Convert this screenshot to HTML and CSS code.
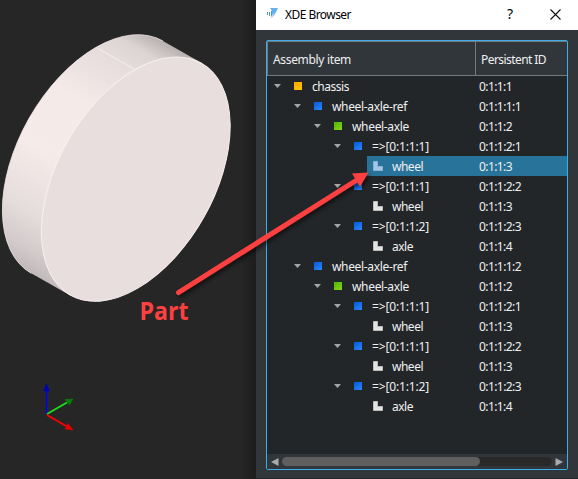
FILE: index.html
```
<!DOCTYPE html>
<html lang="en">
<head>
<meta charset="utf-8">
<title>XDE Browser</title>
<link rel="stylesheet" href="styles.css">
</head>
<body>
<main class="app">
  <section class="viewport">
    <svg width="256" height="479" viewBox="0 0 256 479">
      <defs>
        <linearGradient id="side" gradientUnits="userSpaceOnUse" x1="50" y1="284" x2="182" y2="52">
          <stop offset="0" stop-color="#c2baba"/>
          <stop offset=".08" stop-color="#d4cccc"/>
          <stop offset=".2" stop-color="#e5dcdc"/>
          <stop offset=".42" stop-color="#f5ebe9"/>
          <stop offset=".65" stop-color="#f4eae8"/>
          <stop offset=".84" stop-color="#e7dddd"/>
          <stop offset=".93" stop-color="#dcd3d3"/>
          <stop offset="1" stop-color="#b9b1b1"/>
        </linearGradient>
      </defs>
      <path d="M201.700 63.100L163 41A133.5 78.3 -60.5 0 0 31.2 273.3L69.9 295.3Z" fill="url(#side)"/>
      <path d="M163 41A133.5 78.3 -60.5 0 0 31.2 273.3" fill="none" stroke="#f4ebea" stroke-width=".8"/>
      <path d="M98 48.5L135.5 70" stroke="#f8f0ef"/>
      <ellipse cx="135.8" cy="179.2" rx="133.2" ry="78" transform="rotate(-60.5 135.8 179.2)" fill="#e8dedd" stroke="#f8f0ef"/>
      <path d="M46.5 414V391" stroke="#00f" stroke-width="1.5"/>
      <path d="M46.5 384L49.5 391H43.5Z" fill="#0000b4" stroke="#0000b4" stroke-width=".5"/>
      <path d="M47 414L67 402.500" stroke="#1be01b" stroke-width="1.8"/>
      <path d="M73 399L69.500 405L65 399.500Z" fill="#078007" stroke="#078007" stroke-width=".5"/>
      <path d="M47 415L67 426.500" stroke="#f00" stroke-width="1.8"/>
      <path d="M73 430L65 429L68 423.500Z" fill="#e80000" stroke="#e80000" stroke-width=".5"/>
    </svg>
  </section>
  <section class="dialog">
    <header class="titlebar">
      <svg class="logo" width="12" height="10" viewBox="0 0 12 10"><path d="M3 0H11L7 8H5V3Z" fill="#61b2ed"/><path d="M0 4H1V7H0ZM2 4H3V8H2ZM4 3H5V9H4Z" fill="#4a9ad8"/><path d="M6 6L8 5L6 9L3 10Z" fill="#b8dbf3"/></svg>
      <h1 class="title"><span class="fit" data-width="66">XDE Browser</span></h1>
      <span class="help">?</span>
      <svg class="close" width="11" height="11" viewBox="0 0 11 11"><path d="M.5 .5L10.500 10.500M10.500 .5L.5 10.500" stroke="#111" stroke-width="1.1"/></svg>
    </header>
    <div class="tree">
      <div class="columns"><span class="item-column"><span class="fit" data-width="78">Assembly item</span></span><span class="id-column"><span class="fit" data-width="65">Persistent ID</span></span></div>
      <div class="rows" id="rows"></div>
      <div class="scrollbar">
        <svg width="8" height="8" viewBox="0 0 8 8"><path d="M7.500 0V8L0 4Z" fill="#aaa"/></svg>
        <div class="track"><div class="thumb"></div></div>
        <svg width="8" height="8" viewBox="0 0 8 8"><path d="M.5 0V8L8 4Z" fill="#aaa"/></svg>
      </div>
    </div>
  </section>
  <svg class="callout" width="578" height="479" viewBox="0 0 578 479">
    <defs><filter id="shadow" x="-10%" y="-10%" width="120%" height="130%"><feDropShadow dx="2" dy="2.500" stdDeviation="2" flood-color="#000" flood-opacity=".6"/></filter></defs>
    <g filter="url(#shadow)">
      <path d="M178.500 292.500L360 178" stroke="#ff4041" stroke-width="5" stroke-linecap="round"/>
      <path d="M368.500 172.500L360 186.500L352 173.500Z" fill="#ff4041"/>
    </g>
    <text class="callout-text" x="139.500" y="320" textLength="49" lengthAdjust="spacingAndGlyphs">Part</text>
  </svg>
</main>
<script src="tree.js"></script>
</body>
</html>
```
FILE: styles.css
```
body {
  margin: 0;
  font: 12px/20px "Noto Sans", "Open Sans", sans-serif;
  color: #eff0f1;
}
svg { display: block; flex: none; }
.app {
  position: relative;
  display: flex;
  width: 578px;
  height: 479px;
  overflow: hidden;
  background: #262626;
}
.viewport {
  width: 256px;
  background: linear-gradient(90deg, #262626 240px, #1d1d1d);
}
.dialog {
  box-sizing: border-box;
  width: 322px;
  height: 479px;
  background: #31363b;
  border-bottom: 1px solid #25282b;
}
.titlebar {
  box-sizing: border-box;
  display: flex;
  align-items: center;
  height: 30px;
  padding: 0 17px 2px 11px;
  background: #fff;
  color: #000;
}
.logo { margin-bottom: 2px; }
.title {
  margin: 2px 0 0 6px;
  font-size: 12px;
  font-weight: 400;
}
.help {
  margin-left: auto;
  margin-right: 37px;
  font-size: 14px;
}
.tree {
  box-sizing: border-box;
  display: flex;
  flex-direction: column;
  width: 302px;
  height: 430px;
  margin: 10px;
  border: 1px solid #3daee9;
  border-radius: 2px;
  background: #232629;
}
.columns {
  box-sizing: border-box;
  display: flex;
  height: 35px;
  border: solid #76797c;
  border-width: 1px 0 1px 1px;
  background: #31363b;
  line-height: 35px;
}
.item-column {
  box-sizing: border-box;
  width: 208px;
  padding-left: 5px;
  border-right: 1px solid #76797c;
}
.id-column { padding-left: 5px; }
.rows { flex: 1; }
.row {
  display: flex;
  height: 20px;
  line-height: 22px;
  white-space: nowrap;
}
.name {
  display: flex;
  align-items: center;
  box-sizing: border-box;
  width: 212px;
  height: 20px;
}
.level-0 { padding-left: 7px; }
.level-1 { padding-left: 27px; }
.level-2 { padding-left: 47px; }
.level-3 { padding-left: 67px; }
.level-4 { padding-left: 100px; }
.level-4 .cell { padding-left: 6px; }
.selected .cell, .selected .pid { background: #287399; }
.arrow { width: 7px; margin-bottom: 1px; }
.cell {
  flex: 1;
  display: flex;
  align-items: center;
  height: 20px;
  padding-left: 13px;
}
.cell .fit {
  margin-top: 2px;
  line-height: 18px;
}
.square {
  width: 8px;
  height: 8px;
  margin-right: 10px;
}
.blue { background: linear-gradient(145deg, #0059db, #2e88ff); }
.green { background: linear-gradient(145deg, #52b600, #80d719); }
.gold { background: linear-gradient(145deg, #ffa500, #ffc600); }
.part { margin-right: 9px; }
.pid { flex: 1; height: 20px; }
.scrollbar {
  display: flex;
  align-items: center;
  justify-content: space-between;
  height: 15px;
  padding: 0 4px;
  background: #31363b;
}
.track {
  width: 270px;
  height: 9px;
  border-radius: 5px;
  background: #2a2929;
}
.thumb {
  width: 198px;
  height: 9px;
  border-radius: 5px;
  background: #605f5f;
}
.callout {
  position: absolute;
  left: 0;
  top: 0;
}
.callout-text {
  fill: #ff4041;
  font: 700 25px "Open Sans", "Noto Sans", sans-serif;
}
```
FILE: tree.js
```
const items = [
  [0, "gold", "chassis", "0:1:1:1", 37],
  [1, "blue", "wheel-axle-ref", "0:1:1:1:1", 75],
  [2, "green", "wheel-axle", "0:1:1:2", 57],
  [3, "blue", "=>[0:1:1:1]", "0:1:1:2:1", 57],
  [4, "part", "wheel", "0:1:1:3", 31, true],
  [3, "blue", "=>[0:1:1:1]", "0:1:1:2:2", 57],
  [4, "part", "wheel", "0:1:1:3", 31],
  [3, "blue", "=>[0:1:1:2]", "0:1:1:2:3", 57],
  [4, "part", "axle", "0:1:1:4", 21],
  [1, "blue", "wheel-axle-ref", "0:1:1:1:2", 75],
  [2, "green", "wheel-axle", "0:1:1:2", 57],
  [3, "blue", "=>[0:1:1:1]", "0:1:1:2:1", 57],
  [4, "part", "wheel", "0:1:1:3", 31],
  [3, "blue", "=>[0:1:1:1]", "0:1:1:2:2", 57],
  [4, "part", "wheel", "0:1:1:3", 31],
  [3, "blue", "=>[0:1:1:2]", "0:1:1:2:3", 57],
  [4, "part", "axle", "0:1:1:4", 21]
];

const arrow = '<svg class="arrow" width="7" height="4" viewBox="0 0 7 4"><path d="M0 0H7L3.500 4Z" fill="#a5a5a5"/></svg>';
const partIcon = (selected) => `<svg class="part" width="10" height="10" viewBox="0 0 10 10"><path d="M.5 .5H4.500V5.500H9.500V9.500H.5Z" fill="${selected ? "#a5c5e4" : "#e4e4e2"}" stroke="${selected ? "#8db2d4" : "#bdbdbb"}"/></svg>`;

document.getElementById("rows").innerHTML = items.map(([level, kind, name, id, width, selected]) => {
  const icon = kind === "part" ? partIcon(selected) : `<i class="square ${kind}"></i>`;
  return `<div class="row${selected ? " selected" : ""}"><div class="name level-${level}">${level < 4 ? arrow : ""}<div class="cell">${icon}<span class="fit" data-width="${width}">${name}</span></div></div><div class="pid"><span class="fit" data-width="${id.length === 7 ? 33 : 42}">${id}</span></div></div>`;
}).join("");

document.querySelectorAll(".fit").forEach((label) => {
  const natural = label.getBoundingClientRect().width;
  label.style.letterSpacing = `${(label.dataset.width - natural) / label.textContent.length}px`;
});
```
